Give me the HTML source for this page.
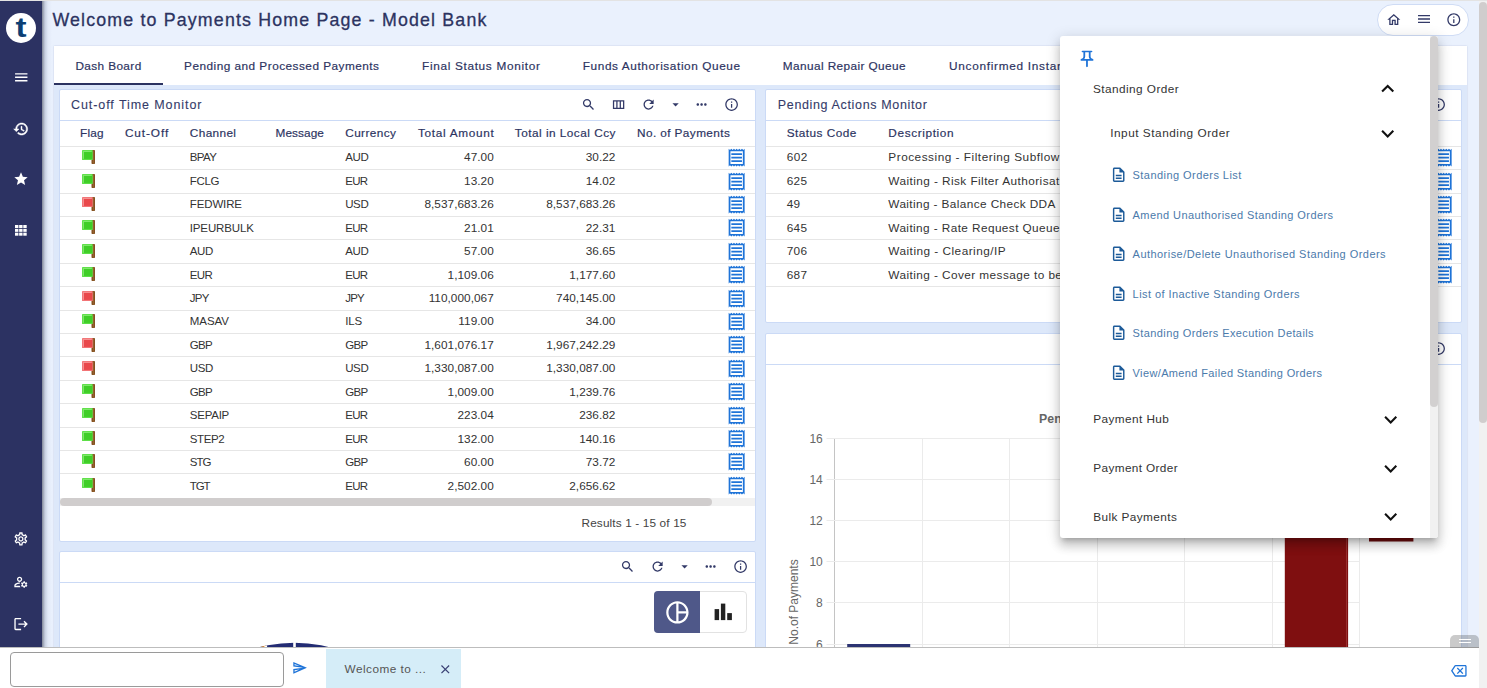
<!DOCTYPE html>
<html lang="en"><head><meta charset="utf-8"><title>Welcome to Payments Home Page - Model Bank</title>
<style>
html,body{margin:0;padding:0;}
body{width:1487px;height:688px;overflow:hidden;position:relative;background:#eaf1fd;font-family:"Liberation Sans",Arial,sans-serif;}
.t{position:absolute;white-space:nowrap;line-height:20px;}
.ic{position:absolute;display:block;}
.abs{position:absolute;box-sizing:border-box;}
.card{position:absolute;box-sizing:border-box;background:#fff;border:1px solid #cbdaf6;border-radius:2px;}
.hline{position:absolute;height:1px;background:#cbdaf6;}
.rline{position:absolute;height:1px;background:#e6e6e6;}
</style></head><body>
<header><span class="t" style="top:10.00px;font-size:17.80px;color:#2c3361;letter-spacing:1.168px;left:52.40px;-webkit-text-stroke:0.30px #2c3361;">Welcome to Payments Home Page - Model Bank</span><div class="abs" style="left:1377.4px;top:4.4px;width:91.2px;height:31.4px;border:1px solid #cfdcf5;border-radius:16px;background:#fff;"></div><svg class="ic" style="left:1385.80px;top:11.70px;width:15.60px;height:15.60px;" viewBox="0 0 24 24"><path fill="#333a68" d="M12 5.69l5 4.5V18h-2v-6H9v6H7v-7.81l5-4.500M12 3L2 12h3v8h6v-6h2v6h6v-8h3L12 3z"/></svg><svg class="ic" style="left:1415.50px;top:11.40px;width:16.00px;height:16.00px;" viewBox="0 0 24 24"><path fill="#333a68" d="M3 18h18v-2H3v2zm0-5h18v-2H3v2zm0-7v2h18V6H3z"/></svg><svg class="ic" style="left:1445.90px;top:11.70px;width:15.60px;height:15.60px;" viewBox="0 0 24 24"><path fill="#333a68" d="M11 7h2v2h-2zm0 4h2v6h-2zm1-9C6.48 2 2 6.48 2 12s4.48 10 10 10 10-4.48 10-10S17.520 2 12 2zm0 18c-4.41 0-8-3.59-8-8s3.59-8 8-8 8 3.59 8 8-3.59 8-8 8z"/></svg></header>
<main><div class="abs" style="left:54px;top:46px;width:1413px;height:602px;background:#dde8fa;box-shadow:0 0 1.500px rgba(130,140,185,.4);"></div><nav class="abs" style="left:54px;top:46px;width:1413px;height:39px;background:#fff;"></nav><div class="abs" style="left:54px;top:83px;width:109px;height:2px;background:#2c3361;"></div><span class="t" style="top:56.00px;font-size:11.80px;color:#2c3361;letter-spacing:0.389px;left:75.40px;-webkit-text-stroke:0.18px #2c3361;">Dash Board</span><span class="t" style="top:56.00px;font-size:11.80px;color:#2c3361;letter-spacing:0.479px;left:184.10px;-webkit-text-stroke:0.18px #2c3361;">Pending and Processed Payments</span><span class="t" style="top:56.00px;font-size:11.80px;color:#2c3361;letter-spacing:0.679px;left:422.00px;-webkit-text-stroke:0.18px #2c3361;">Final Status Monitor</span><span class="t" style="top:56.00px;font-size:11.80px;color:#2c3361;letter-spacing:0.597px;left:582.80px;-webkit-text-stroke:0.18px #2c3361;">Funds Authorisation Queue</span><span class="t" style="top:56.00px;font-size:11.80px;color:#2c3361;letter-spacing:0.410px;left:782.80px;-webkit-text-stroke:0.18px #2c3361;">Manual Repair Queue</span><span class="t" style="top:56.00px;font-size:11.80px;color:#2c3361;letter-spacing:0.720px;left:949.00px;-webkit-text-stroke:0.18px #2c3361;">Unconfirmed Instant Payments</span><section class="card" style="left:59px;top:89px;width:697px;height:453px;"></section><div class="hline" style="left:60px;top:120px;width:695px;"></div><span class="t" style="top:95.00px;font-size:12.50px;color:#343b69;letter-spacing:0.920px;left:71.00px;-webkit-text-stroke:0.10px #343b69;">Cut-off Time Monitor</span><svg class="ic" style="left:580.70px;top:96.80px;width:15.20px;height:15.20px;" viewBox="0 0 24 24"><path fill="#333a68" d="M15.5 14h-.79l-.28-.27C15.41 12.59 16 11.11 16 9.5 16 5.91 13.09 3 9.5 3S3 5.91 3 9.5 5.91 16 9.5 16c1.61 0 3.09-.59 4.23-1.57l.27.28v.79l5 4.99L20.49 19l-4.99-5zm-6 0C7.01 14 5 11.99 5 9.500S7.01 5 9.5 5 14 7.01 14 9.5 11.99 14 9.5 14z"/></svg><svg class="ic" style="left:610.90px;top:96.80px;width:15.20px;height:15.20px;" viewBox="0 0 24 24"><path fill="#333a68" d="M3 5v14h18V5H3zm5.33 12H5V7h3.33v10zm5.34 0h-3.33V7h3.33v10zM19 17h-3.33V7H19v10z"/></svg><svg class="ic" style="left:641.30px;top:96.80px;width:15.20px;height:15.20px;" viewBox="0 0 24 24"><path fill="#333a68" d="M17.65 6.35C16.2 4.9 14.21 4 12 4c-4.42 0-7.99 3.58-7.99 8s3.57 8 7.99 8c3.73 0 6.84-2.55 7.73-6h-2.08c-.82 2.33-3.04 4-5.65 4-3.31 0-6-2.69-6-6s2.69-6 6-6c1.66 0 3.14.69 4.22 1.78L13 11h7V4l-2.35 2.35z"/></svg><svg class="ic" style="left:667.50px;top:96.80px;width:15.20px;height:15.20px;" viewBox="0 0 24 24"><path fill="#333a68" d="M7 10l5 5 5-5z"/></svg><svg class="ic" style="left:694.00px;top:96.80px;width:15.20px;height:15.20px;" viewBox="0 0 24 24"><path fill="#333a68" d="M6 10c-1.1 0-2 .9-2 2s.9 2 2 2 2-.9 2-2-.9-2-2-2zm12 0c-1.1 0-2 .9-2 2s.9 2 2 2 2-.9 2-2-.9-2-2-2zm-6 0c-1.1 0-2 .9-2 2s.9 2 2 2 2-.9 2-2-.9-2-2-2z"/></svg><svg class="ic" style="left:723.60px;top:96.80px;width:15.20px;height:15.20px;" viewBox="0 0 24 24"><path fill="#333a68" d="M11 7h2v2h-2zm0 4h2v6h-2zm1-9C6.48 2 2 6.48 2 12s4.48 10 10 10 10-4.48 10-10S17.520 2 12 2zm0 18c-4.41 0-8-3.59-8-8s3.59-8 8-8 8 3.59 8 8-3.59 8-8 8z"/></svg><span class="t" style="top:123.00px;font-size:11.80px;color:#2c3361;letter-spacing:0.182px;left:80.10px;-webkit-text-stroke:0.18px #2c3361;">Flag</span><span class="t" style="top:123.00px;font-size:11.80px;color:#2c3361;letter-spacing:0.915px;left:124.90px;-webkit-text-stroke:0.18px #2c3361;">Cut-Off</span><span class="t" style="top:123.00px;font-size:11.80px;color:#2c3361;letter-spacing:0.374px;left:189.80px;-webkit-text-stroke:0.18px #2c3361;">Channel</span><span class="t" style="top:123.00px;font-size:11.80px;color:#2c3361;letter-spacing:0.087px;left:275.50px;-webkit-text-stroke:0.18px #2c3361;">Message</span><span class="t" style="top:123.00px;font-size:11.80px;color:#2c3361;letter-spacing:0.420px;left:345.20px;-webkit-text-stroke:0.18px #2c3361;">Currency</span><span class="t" style="top:123.00px;font-size:11.80px;color:#2c3361;letter-spacing:0.682px;right:992.62px;-webkit-text-stroke:0.18px #2c3361;">Total Amount</span><span class="t" style="top:123.00px;font-size:11.80px;color:#2c3361;letter-spacing:0.479px;right:871.12px;-webkit-text-stroke:0.18px #2c3361;">Total in Local Ccy</span><span class="t" style="top:123.00px;font-size:11.80px;color:#2c3361;letter-spacing:0.406px;left:637.00px;-webkit-text-stroke:0.18px #2c3361;">No. of Payments</span><div class="rline" style="left:60px;top:145.80px;width:695px;"></div><svg class="ic" style="left:81.90px;top:150.00px;width:14px;height:15px" viewBox="0 0 14 15"><rect x="9.500" y="0" width="3.500" height="13.900" rx="0.700" fill="#83501f"/><rect x="10.900" y="0.400" width="1.200" height="13.200" fill="#9a6534" opacity=".8"/><rect x="0" y="0" width="10.800" height="10.100" rx="0.700" fill="#5ddf47"/><rect x="1.700" y="1.700" width="8.300" height="7.200" fill="#3fce27"/><path d="M1.400 8.800V1.400H9.700" fill="none" stroke="#a4f595" stroke-width="0.700" opacity=".85"/></svg><span class="t" style="top:147.00px;font-size:11.50px;color:#333;letter-spacing:-0.628px;left:189.80px;">BPAY</span><span class="t" style="top:147.00px;font-size:11.50px;color:#333;letter-spacing:-0.391px;left:345.20px;">AUD</span><span class="t" style="top:147.00px;font-size:11.80px;color:#333;letter-spacing:0.034px;right:993.27px;">47.00</span><span class="t" style="top:147.00px;font-size:11.80px;color:#333;letter-spacing:0.034px;right:871.57px;">30.22</span><svg class="ic" style="left:725.85px;top:147.15px;width:21.30px;height:21.30px;" viewBox="0 0 24 24"><path fill="#1f74d8" d="M19.500 3.500L18 2l-1.500 1.500L15 2l-1.500 1.500L12 2l-1.500 1.500L9 2 7.500 3.500 6 2 4.500 3.500 3 2v20l1.500-1.500L6 22l1.500-1.500L9 22l1.500-1.500L12 22l1.500-1.500L15 22l1.500-1.500L18 22l1.500-1.500L21 22V2l-1.500 1.500zM19 19.090H5V4.910h14v14.180zM6 15h12v2H6zm0-4h12v2H6zm0-4h12v2H6z"/></svg><div class="rline" style="left:60px;top:169.20px;width:695px;"></div><svg class="ic" style="left:81.90px;top:174.00px;width:14px;height:15px" viewBox="0 0 14 15"><rect x="9.500" y="0" width="3.500" height="13.900" rx="0.700" fill="#83501f"/><rect x="10.900" y="0.400" width="1.200" height="13.200" fill="#9a6534" opacity=".8"/><rect x="0" y="0" width="10.800" height="10.100" rx="0.700" fill="#5ddf47"/><rect x="1.700" y="1.700" width="8.300" height="7.200" fill="#3fce27"/><path d="M1.400 8.800V1.400H9.700" fill="none" stroke="#a4f595" stroke-width="0.700" opacity=".85"/></svg><span class="t" style="top:171.00px;font-size:11.50px;color:#333;letter-spacing:-0.324px;left:189.80px;">FCLG</span><span class="t" style="top:171.00px;font-size:11.50px;color:#333;letter-spacing:-0.691px;left:345.20px;">EUR</span><span class="t" style="top:171.00px;font-size:11.80px;color:#333;letter-spacing:0.034px;right:993.27px;">13.20</span><span class="t" style="top:171.00px;font-size:11.80px;color:#333;letter-spacing:0.034px;right:871.57px;">14.02</span><svg class="ic" style="left:725.85px;top:170.55px;width:21.30px;height:21.30px;" viewBox="0 0 24 24"><path fill="#1f74d8" d="M19.500 3.500L18 2l-1.500 1.500L15 2l-1.500 1.500L12 2l-1.500 1.500L9 2 7.500 3.500 6 2 4.500 3.500 3 2v20l1.500-1.500L6 22l1.500-1.500L9 22l1.500-1.500L12 22l1.500-1.500L15 22l1.500-1.500L18 22l1.500-1.500L21 22V2l-1.500 1.500zM19 19.090H5V4.910h14v14.180zM6 15h12v2H6zm0-4h12v2H6zm0-4h12v2H6z"/></svg><div class="rline" style="left:60px;top:192.60px;width:695px;"></div><svg class="ic" style="left:81.90px;top:197.00px;width:14px;height:15px" viewBox="0 0 14 15"><rect x="9.500" y="0" width="3.500" height="13.900" rx="0.700" fill="#83501f"/><rect x="10.900" y="0.400" width="1.200" height="13.200" fill="#9a6534" opacity=".8"/><rect x="0" y="0" width="10.800" height="10.100" rx="0.700" fill="#f27476"/><rect x="1.700" y="1.700" width="8.300" height="7.200" fill="#e9484b"/><path d="M1.400 8.800V1.400H9.700" fill="none" stroke="#fbb4b4" stroke-width="0.700" opacity=".85"/></svg><span class="t" style="top:194.00px;font-size:11.50px;color:#333;letter-spacing:-0.139px;left:189.80px;">FEDWIRE</span><span class="t" style="top:194.00px;font-size:11.50px;color:#333;letter-spacing:-0.391px;left:345.20px;">USD</span><span class="t" style="top:194.00px;font-size:11.80px;color:#333;letter-spacing:0.037px;right:993.26px;">8,537,683.26</span><span class="t" style="top:194.00px;font-size:11.80px;color:#333;letter-spacing:0.037px;right:871.56px;">8,537,683.26</span><svg class="ic" style="left:725.85px;top:193.95px;width:21.30px;height:21.30px;" viewBox="0 0 24 24"><path fill="#1f74d8" d="M19.500 3.500L18 2l-1.500 1.500L15 2l-1.500 1.500L12 2l-1.500 1.500L9 2 7.500 3.500 6 2 4.500 3.500 3 2v20l1.500-1.500L6 22l1.500-1.500L9 22l1.500-1.500L12 22l1.500-1.500L15 22l1.500-1.500L18 22l1.500-1.500L21 22V2l-1.500 1.500zM19 19.090H5V4.910h14v14.180zM6 15h12v2H6zm0-4h12v2H6zm0-4h12v2H6z"/></svg><div class="rline" style="left:60px;top:216.00px;width:695px;"></div><svg class="ic" style="left:81.90px;top:220.00px;width:14px;height:15px" viewBox="0 0 14 15"><rect x="9.500" y="0" width="3.500" height="13.900" rx="0.700" fill="#83501f"/><rect x="10.900" y="0.400" width="1.200" height="13.200" fill="#9a6534" opacity=".8"/><rect x="0" y="0" width="10.800" height="10.100" rx="0.700" fill="#5ddf47"/><rect x="1.700" y="1.700" width="8.300" height="7.200" fill="#3fce27"/><path d="M1.400 8.800V1.400H9.700" fill="none" stroke="#a4f595" stroke-width="0.700" opacity=".85"/></svg><span class="t" style="top:218.00px;font-size:11.50px;color:#333;letter-spacing:-0.148px;left:189.80px;">IPEURBULK</span><span class="t" style="top:218.00px;font-size:11.50px;color:#333;letter-spacing:-0.691px;left:345.20px;">EUR</span><span class="t" style="top:218.00px;font-size:11.80px;color:#333;letter-spacing:0.034px;right:993.27px;">21.01</span><span class="t" style="top:218.00px;font-size:11.80px;color:#333;letter-spacing:0.034px;right:871.57px;">22.31</span><svg class="ic" style="left:725.85px;top:217.35px;width:21.30px;height:21.30px;" viewBox="0 0 24 24"><path fill="#1f74d8" d="M19.500 3.500L18 2l-1.500 1.500L15 2l-1.500 1.500L12 2l-1.500 1.500L9 2 7.500 3.500 6 2 4.500 3.500 3 2v20l1.500-1.500L6 22l1.500-1.500L9 22l1.500-1.500L12 22l1.500-1.500L15 22l1.500-1.500L18 22l1.500-1.500L21 22V2l-1.500 1.500zM19 19.090H5V4.910h14v14.180zM6 15h12v2H6zm0-4h12v2H6zm0-4h12v2H6z"/></svg><div class="rline" style="left:60px;top:239.40px;width:695px;"></div><svg class="ic" style="left:81.90px;top:244.00px;width:14px;height:15px" viewBox="0 0 14 15"><rect x="9.500" y="0" width="3.500" height="13.900" rx="0.700" fill="#83501f"/><rect x="10.900" y="0.400" width="1.200" height="13.200" fill="#9a6534" opacity=".8"/><rect x="0" y="0" width="10.800" height="10.100" rx="0.700" fill="#5ddf47"/><rect x="1.700" y="1.700" width="8.300" height="7.200" fill="#3fce27"/><path d="M1.400 8.800V1.400H9.700" fill="none" stroke="#a4f595" stroke-width="0.700" opacity=".85"/></svg><span class="t" style="top:241.00px;font-size:11.50px;color:#333;letter-spacing:-0.391px;left:189.80px;">AUD</span><span class="t" style="top:241.00px;font-size:11.50px;color:#333;letter-spacing:-0.391px;left:345.20px;">AUD</span><span class="t" style="top:241.00px;font-size:11.80px;color:#333;letter-spacing:0.034px;right:993.27px;">57.00</span><span class="t" style="top:241.00px;font-size:11.80px;color:#333;letter-spacing:0.034px;right:871.57px;">36.65</span><svg class="ic" style="left:725.85px;top:240.75px;width:21.30px;height:21.30px;" viewBox="0 0 24 24"><path fill="#1f74d8" d="M19.500 3.500L18 2l-1.500 1.500L15 2l-1.500 1.500L12 2l-1.500 1.500L9 2 7.500 3.500 6 2 4.500 3.500 3 2v20l1.500-1.500L6 22l1.500-1.500L9 22l1.500-1.500L12 22l1.500-1.500L15 22l1.500-1.500L18 22l1.500-1.500L21 22V2l-1.500 1.500zM19 19.090H5V4.910h14v14.180zM6 15h12v2H6zm0-4h12v2H6zm0-4h12v2H6z"/></svg><div class="rline" style="left:60px;top:262.80px;width:695px;"></div><svg class="ic" style="left:81.90px;top:267.00px;width:14px;height:15px" viewBox="0 0 14 15"><rect x="9.500" y="0" width="3.500" height="13.900" rx="0.700" fill="#83501f"/><rect x="10.900" y="0.400" width="1.200" height="13.200" fill="#9a6534" opacity=".8"/><rect x="0" y="0" width="10.800" height="10.100" rx="0.700" fill="#5ddf47"/><rect x="1.700" y="1.700" width="8.300" height="7.200" fill="#3fce27"/><path d="M1.400 8.800V1.400H9.700" fill="none" stroke="#a4f595" stroke-width="0.700" opacity=".85"/></svg><span class="t" style="top:265.00px;font-size:11.50px;color:#333;letter-spacing:-0.691px;left:189.80px;">EUR</span><span class="t" style="top:265.00px;font-size:11.50px;color:#333;letter-spacing:-0.691px;left:345.20px;">EUR</span><span class="t" style="top:265.00px;font-size:11.80px;color:#333;letter-spacing:0.034px;right:993.27px;">1,109.06</span><span class="t" style="top:265.00px;font-size:11.80px;color:#333;letter-spacing:0.034px;right:871.57px;">1,177.60</span><svg class="ic" style="left:725.85px;top:264.15px;width:21.30px;height:21.30px;" viewBox="0 0 24 24"><path fill="#1f74d8" d="M19.500 3.500L18 2l-1.500 1.500L15 2l-1.500 1.500L12 2l-1.500 1.500L9 2 7.500 3.500 6 2 4.500 3.500 3 2v20l1.500-1.500L6 22l1.500-1.500L9 22l1.500-1.500L12 22l1.500-1.500L15 22l1.500-1.500L18 22l1.500-1.500L21 22V2l-1.500 1.500zM19 19.090H5V4.910h14v14.180zM6 15h12v2H6zm0-4h12v2H6zm0-4h12v2H6z"/></svg><div class="rline" style="left:60px;top:286.20px;width:695px;"></div><svg class="ic" style="left:81.90px;top:291.00px;width:14px;height:15px" viewBox="0 0 14 15"><rect x="9.500" y="0" width="3.500" height="13.900" rx="0.700" fill="#83501f"/><rect x="10.900" y="0.400" width="1.200" height="13.200" fill="#9a6534" opacity=".8"/><rect x="0" y="0" width="10.800" height="10.100" rx="0.700" fill="#f27476"/><rect x="1.700" y="1.700" width="8.300" height="7.200" fill="#e9484b"/><path d="M1.400 8.800V1.400H9.700" fill="none" stroke="#fbb4b4" stroke-width="0.700" opacity=".85"/></svg><span class="t" style="top:288.00px;font-size:11.50px;color:#333;letter-spacing:-0.747px;left:189.80px;">JPY</span><span class="t" style="top:288.00px;font-size:11.50px;color:#333;letter-spacing:-0.747px;left:345.20px;">JPY</span><span class="t" style="top:288.00px;font-size:11.80px;color:#333;letter-spacing:0.034px;right:993.27px;">110,000,067</span><span class="t" style="top:288.00px;font-size:11.80px;color:#333;letter-spacing:0.034px;right:871.57px;">740,145.00</span><svg class="ic" style="left:725.85px;top:287.55px;width:21.30px;height:21.30px;" viewBox="0 0 24 24"><path fill="#1f74d8" d="M19.500 3.500L18 2l-1.500 1.500L15 2l-1.500 1.500L12 2l-1.500 1.500L9 2 7.500 3.500 6 2 4.500 3.500 3 2v20l1.500-1.500L6 22l1.500-1.500L9 22l1.500-1.500L12 22l1.500-1.500L15 22l1.500-1.500L18 22l1.500-1.500L21 22V2l-1.500 1.500zM19 19.090H5V4.910h14v14.180zM6 15h12v2H6zm0-4h12v2H6zm0-4h12v2H6z"/></svg><div class="rline" style="left:60px;top:309.60px;width:695px;"></div><svg class="ic" style="left:81.90px;top:314.00px;width:14px;height:15px" viewBox="0 0 14 15"><rect x="9.500" y="0" width="3.500" height="13.900" rx="0.700" fill="#83501f"/><rect x="10.900" y="0.400" width="1.200" height="13.200" fill="#9a6534" opacity=".8"/><rect x="0" y="0" width="10.800" height="10.100" rx="0.700" fill="#5ddf47"/><rect x="1.700" y="1.700" width="8.300" height="7.200" fill="#3fce27"/><path d="M1.400 8.800V1.400H9.700" fill="none" stroke="#a4f595" stroke-width="0.700" opacity=".85"/></svg><span class="t" style="top:311.00px;font-size:11.50px;color:#333;letter-spacing:-0.055px;left:189.80px;">MASAV</span><span class="t" style="top:311.00px;font-size:11.50px;color:#333;letter-spacing:-0.133px;left:345.20px;">ILS</span><span class="t" style="top:311.00px;font-size:11.80px;color:#333;letter-spacing:0.034px;right:993.27px;">119.00</span><span class="t" style="top:311.00px;font-size:11.80px;color:#333;letter-spacing:0.034px;right:871.57px;">34.00</span><svg class="ic" style="left:725.85px;top:310.95px;width:21.30px;height:21.30px;" viewBox="0 0 24 24"><path fill="#1f74d8" d="M19.500 3.500L18 2l-1.500 1.500L15 2l-1.500 1.500L12 2l-1.500 1.500L9 2 7.500 3.500 6 2 4.500 3.500 3 2v20l1.500-1.500L6 22l1.500-1.500L9 22l1.500-1.500L12 22l1.500-1.500L15 22l1.500-1.500L18 22l1.500-1.500L21 22V2l-1.500 1.500zM19 19.090H5V4.910h14v14.180zM6 15h12v2H6zm0-4h12v2H6zm0-4h12v2H6z"/></svg><div class="rline" style="left:60px;top:333.00px;width:695px;"></div><svg class="ic" style="left:81.90px;top:338.00px;width:14px;height:15px" viewBox="0 0 14 15"><rect x="9.500" y="0" width="3.500" height="13.900" rx="0.700" fill="#83501f"/><rect x="10.900" y="0.400" width="1.200" height="13.200" fill="#9a6534" opacity=".8"/><rect x="0" y="0" width="10.800" height="10.100" rx="0.700" fill="#f27476"/><rect x="1.700" y="1.700" width="8.300" height="7.200" fill="#e9484b"/><path d="M1.400 8.800V1.400H9.700" fill="none" stroke="#fbb4b4" stroke-width="0.700" opacity=".85"/></svg><span class="t" style="top:335.00px;font-size:11.50px;color:#333;letter-spacing:-0.698px;left:189.80px;">GBP</span><span class="t" style="top:335.00px;font-size:11.50px;color:#333;letter-spacing:-0.698px;left:345.20px;">GBP</span><span class="t" style="top:335.00px;font-size:11.80px;color:#333;letter-spacing:0.034px;right:993.27px;">1,601,076.17</span><span class="t" style="top:335.00px;font-size:11.80px;color:#333;letter-spacing:0.034px;right:871.57px;">1,967,242.29</span><svg class="ic" style="left:725.85px;top:334.35px;width:21.30px;height:21.30px;" viewBox="0 0 24 24"><path fill="#1f74d8" d="M19.500 3.500L18 2l-1.500 1.500L15 2l-1.500 1.500L12 2l-1.500 1.500L9 2 7.500 3.500 6 2 4.500 3.500 3 2v20l1.500-1.500L6 22l1.500-1.500L9 22l1.500-1.500L12 22l1.500-1.500L15 22l1.500-1.500L18 22l1.500-1.500L21 22V2l-1.500 1.500zM19 19.090H5V4.910h14v14.180zM6 15h12v2H6zm0-4h12v2H6zm0-4h12v2H6z"/></svg><div class="rline" style="left:60px;top:356.40px;width:695px;"></div><svg class="ic" style="left:81.90px;top:361.00px;width:14px;height:15px" viewBox="0 0 14 15"><rect x="9.500" y="0" width="3.500" height="13.900" rx="0.700" fill="#83501f"/><rect x="10.900" y="0.400" width="1.200" height="13.200" fill="#9a6534" opacity=".8"/><rect x="0" y="0" width="10.800" height="10.100" rx="0.700" fill="#f27476"/><rect x="1.700" y="1.700" width="8.300" height="7.200" fill="#e9484b"/><path d="M1.400 8.800V1.400H9.700" fill="none" stroke="#fbb4b4" stroke-width="0.700" opacity=".85"/></svg><span class="t" style="top:358.00px;font-size:11.50px;color:#333;letter-spacing:-0.391px;left:189.80px;">USD</span><span class="t" style="top:358.00px;font-size:11.50px;color:#333;letter-spacing:-0.391px;left:345.20px;">USD</span><span class="t" style="top:358.00px;font-size:11.80px;color:#333;letter-spacing:0.034px;right:993.27px;">1,330,087.00</span><span class="t" style="top:358.00px;font-size:11.80px;color:#333;letter-spacing:0.034px;right:871.57px;">1,330,087.00</span><svg class="ic" style="left:725.85px;top:357.75px;width:21.30px;height:21.30px;" viewBox="0 0 24 24"><path fill="#1f74d8" d="M19.500 3.500L18 2l-1.500 1.500L15 2l-1.500 1.500L12 2l-1.500 1.500L9 2 7.500 3.500 6 2 4.500 3.500 3 2v20l1.500-1.500L6 22l1.500-1.500L9 22l1.500-1.500L12 22l1.500-1.500L15 22l1.500-1.500L18 22l1.500-1.500L21 22V2l-1.500 1.500zM19 19.090H5V4.910h14v14.180zM6 15h12v2H6zm0-4h12v2H6zm0-4h12v2H6z"/></svg><div class="rline" style="left:60px;top:379.80px;width:695px;"></div><svg class="ic" style="left:81.90px;top:384.00px;width:14px;height:15px" viewBox="0 0 14 15"><rect x="9.500" y="0" width="3.500" height="13.900" rx="0.700" fill="#83501f"/><rect x="10.900" y="0.400" width="1.200" height="13.200" fill="#9a6534" opacity=".8"/><rect x="0" y="0" width="10.800" height="10.100" rx="0.700" fill="#5ddf47"/><rect x="1.700" y="1.700" width="8.300" height="7.200" fill="#3fce27"/><path d="M1.400 8.800V1.400H9.700" fill="none" stroke="#a4f595" stroke-width="0.700" opacity=".85"/></svg><span class="t" style="top:382.00px;font-size:11.50px;color:#333;letter-spacing:-0.698px;left:189.80px;">GBP</span><span class="t" style="top:382.00px;font-size:11.50px;color:#333;letter-spacing:-0.698px;left:345.20px;">GBP</span><span class="t" style="top:382.00px;font-size:11.80px;color:#333;letter-spacing:0.034px;right:993.27px;">1,009.00</span><span class="t" style="top:382.00px;font-size:11.80px;color:#333;letter-spacing:0.034px;right:871.57px;">1,239.76</span><svg class="ic" style="left:725.85px;top:381.15px;width:21.30px;height:21.30px;" viewBox="0 0 24 24"><path fill="#1f74d8" d="M19.500 3.500L18 2l-1.500 1.500L15 2l-1.500 1.500L12 2l-1.500 1.500L9 2 7.500 3.500 6 2 4.500 3.500 3 2v20l1.500-1.500L6 22l1.500-1.500L9 22l1.500-1.500L12 22l1.500-1.500L15 22l1.500-1.500L18 22l1.500-1.500L21 22V2l-1.500 1.500zM19 19.090H5V4.910h14v14.180zM6 15h12v2H6zm0-4h12v2H6zm0-4h12v2H6z"/></svg><div class="rline" style="left:60px;top:403.20px;width:695px;"></div><svg class="ic" style="left:81.90px;top:408.00px;width:14px;height:15px" viewBox="0 0 14 15"><rect x="9.500" y="0" width="3.500" height="13.900" rx="0.700" fill="#83501f"/><rect x="10.900" y="0.400" width="1.200" height="13.200" fill="#9a6534" opacity=".8"/><rect x="0" y="0" width="10.800" height="10.100" rx="0.700" fill="#5ddf47"/><rect x="1.700" y="1.700" width="8.300" height="7.200" fill="#3fce27"/><path d="M1.400 8.800V1.400H9.700" fill="none" stroke="#a4f595" stroke-width="0.700" opacity=".85"/></svg><span class="t" style="top:405.00px;font-size:11.50px;color:#333;letter-spacing:-0.241px;left:189.80px;">SEPAIP</span><span class="t" style="top:405.00px;font-size:11.50px;color:#333;letter-spacing:-0.691px;left:345.20px;">EUR</span><span class="t" style="top:405.00px;font-size:11.80px;color:#333;letter-spacing:0.034px;right:993.27px;">223.04</span><span class="t" style="top:405.00px;font-size:11.80px;color:#333;letter-spacing:0.034px;right:871.57px;">236.82</span><svg class="ic" style="left:725.85px;top:404.55px;width:21.30px;height:21.30px;" viewBox="0 0 24 24"><path fill="#1f74d8" d="M19.500 3.500L18 2l-1.500 1.500L15 2l-1.500 1.500L12 2l-1.500 1.500L9 2 7.500 3.500 6 2 4.500 3.500 3 2v20l1.500-1.500L6 22l1.500-1.500L9 22l1.500-1.500L12 22l1.500-1.500L15 22l1.500-1.500L18 22l1.500-1.500L21 22V2l-1.500 1.500zM19 19.090H5V4.910h14v14.180zM6 15h12v2H6zm0-4h12v2H6zm0-4h12v2H6z"/></svg><div class="rline" style="left:60px;top:426.60px;width:695px;"></div><svg class="ic" style="left:81.90px;top:431.00px;width:14px;height:15px" viewBox="0 0 14 15"><rect x="9.500" y="0" width="3.500" height="13.900" rx="0.700" fill="#83501f"/><rect x="10.900" y="0.400" width="1.200" height="13.200" fill="#9a6534" opacity=".8"/><rect x="0" y="0" width="10.800" height="10.100" rx="0.700" fill="#5ddf47"/><rect x="1.700" y="1.700" width="8.300" height="7.200" fill="#3fce27"/><path d="M1.400 8.800V1.400H9.700" fill="none" stroke="#a4f595" stroke-width="0.700" opacity=".85"/></svg><span class="t" style="top:429.00px;font-size:11.50px;color:#333;letter-spacing:-0.409px;left:189.80px;">STEP2</span><span class="t" style="top:429.00px;font-size:11.50px;color:#333;letter-spacing:-0.691px;left:345.20px;">EUR</span><span class="t" style="top:429.00px;font-size:11.80px;color:#333;letter-spacing:0.034px;right:993.27px;">132.00</span><span class="t" style="top:429.00px;font-size:11.80px;color:#333;letter-spacing:0.034px;right:871.57px;">140.16</span><svg class="ic" style="left:725.85px;top:427.95px;width:21.30px;height:21.30px;" viewBox="0 0 24 24"><path fill="#1f74d8" d="M19.500 3.500L18 2l-1.500 1.500L15 2l-1.500 1.500L12 2l-1.500 1.500L9 2 7.500 3.500 6 2 4.500 3.500 3 2v20l1.500-1.500L6 22l1.500-1.500L9 22l1.500-1.500L12 22l1.500-1.500L15 22l1.500-1.500L18 22l1.500-1.500L21 22V2l-1.500 1.500zM19 19.090H5V4.910h14v14.180zM6 15h12v2H6zm0-4h12v2H6zm0-4h12v2H6z"/></svg><div class="rline" style="left:60px;top:450.00px;width:695px;"></div><svg class="ic" style="left:81.90px;top:454.00px;width:14px;height:15px" viewBox="0 0 14 15"><rect x="9.500" y="0" width="3.500" height="13.900" rx="0.700" fill="#83501f"/><rect x="10.900" y="0.400" width="1.200" height="13.200" fill="#9a6534" opacity=".8"/><rect x="0" y="0" width="10.800" height="10.100" rx="0.700" fill="#5ddf47"/><rect x="1.700" y="1.700" width="8.300" height="7.200" fill="#3fce27"/><path d="M1.400 8.800V1.400H9.700" fill="none" stroke="#a4f595" stroke-width="0.700" opacity=".85"/></svg><span class="t" style="top:452.00px;font-size:11.50px;color:#333;letter-spacing:-1.020px;left:189.80px;">STG</span><span class="t" style="top:452.00px;font-size:11.50px;color:#333;letter-spacing:-0.698px;left:345.20px;">GBP</span><span class="t" style="top:452.00px;font-size:11.80px;color:#333;letter-spacing:0.034px;right:993.27px;">60.00</span><span class="t" style="top:452.00px;font-size:11.80px;color:#333;letter-spacing:0.034px;right:871.57px;">73.72</span><svg class="ic" style="left:725.85px;top:451.35px;width:21.30px;height:21.30px;" viewBox="0 0 24 24"><path fill="#1f74d8" d="M19.500 3.500L18 2l-1.500 1.500L15 2l-1.500 1.500L12 2l-1.500 1.500L9 2 7.500 3.500 6 2 4.500 3.500 3 2v20l1.500-1.500L6 22l1.500-1.500L9 22l1.500-1.500L12 22l1.500-1.500L15 22l1.500-1.500L18 22l1.500-1.500L21 22V2l-1.500 1.500zM19 19.090H5V4.910h14v14.180zM6 15h12v2H6zm0-4h12v2H6zm0-4h12v2H6z"/></svg><div class="rline" style="left:60px;top:473.40px;width:695px;"></div><svg class="ic" style="left:81.90px;top:478.00px;width:14px;height:15px" viewBox="0 0 14 15"><rect x="9.500" y="0" width="3.500" height="13.900" rx="0.700" fill="#83501f"/><rect x="10.900" y="0.400" width="1.200" height="13.200" fill="#9a6534" opacity=".8"/><rect x="0" y="0" width="10.800" height="10.100" rx="0.700" fill="#5ddf47"/><rect x="1.700" y="1.700" width="8.300" height="7.200" fill="#3fce27"/><path d="M1.400 8.800V1.400H9.700" fill="none" stroke="#a4f595" stroke-width="0.700" opacity=".85"/></svg><span class="t" style="top:476.00px;font-size:11.50px;color:#333;letter-spacing:-1.100px;left:189.80px;">TGT</span><span class="t" style="top:476.00px;font-size:11.50px;color:#333;letter-spacing:-0.691px;left:345.20px;">EUR</span><span class="t" style="top:476.00px;font-size:11.80px;color:#333;letter-spacing:0.034px;right:993.27px;">2,502.00</span><span class="t" style="top:476.00px;font-size:11.80px;color:#333;letter-spacing:0.034px;right:871.57px;">2,656.62</span><svg class="ic" style="left:725.85px;top:474.75px;width:21.30px;height:21.30px;" viewBox="0 0 24 24"><path fill="#1f74d8" d="M19.500 3.500L18 2l-1.500 1.500L15 2l-1.500 1.500L12 2l-1.500 1.500L9 2 7.500 3.500 6 2 4.500 3.500 3 2v20l1.500-1.500L6 22l1.500-1.500L9 22l1.500-1.500L12 22l1.500-1.500L15 22l1.500-1.500L18 22l1.500-1.500L21 22V2l-1.500 1.500zM19 19.090H5V4.910h14v14.180zM6 15h12v2H6zm0-4h12v2H6zm0-4h12v2H6z"/></svg><div class="abs" style="left:60px;top:497.5px;width:695px;height:8.500px;background:#f1f1f1;"></div><div class="abs" style="left:60px;top:497.5px;width:652px;height:8.500px;background:#d0cdcd;border-radius:5px;"></div><span class="t" style="top:513.00px;font-size:11.80px;color:#444;letter-spacing:0.137px;left:581.50px;">Results 1 - 15 of 15</span><section class="card" style="left:765px;top:89px;width:697px;height:234px;"></section><div class="hline" style="left:766px;top:120px;width:695px;"></div><span class="t" style="top:95.00px;font-size:12.50px;color:#343b69;letter-spacing:0.645px;left:777.80px;-webkit-text-stroke:0.10px #343b69;">Pending Actions Monitor</span><svg class="ic" style="left:1430.90px;top:96.80px;width:15.20px;height:15.20px;" viewBox="0 0 24 24"><path fill="#333a68" d="M11 7h2v2h-2zm0 4h2v6h-2zm1-9C6.48 2 2 6.48 2 12s4.48 10 10 10 10-4.48 10-10S17.520 2 12 2zm0 18c-4.41 0-8-3.59-8-8s3.59-8 8-8 8 3.59 8 8-3.59 8-8 8z"/></svg><span class="t" style="top:123.00px;font-size:11.80px;color:#2c3361;letter-spacing:0.456px;left:786.80px;-webkit-text-stroke:0.18px #2c3361;">Status Code</span><span class="t" style="top:123.00px;font-size:11.80px;color:#2c3361;letter-spacing:0.628px;left:888.30px;-webkit-text-stroke:0.18px #2c3361;">Description</span><div class="rline" style="left:766px;top:145.80px;width:695px;"></div><span class="t" style="top:147.00px;font-size:11.80px;color:#333;letter-spacing:0.406px;left:786.80px;">602</span><span class="t" style="top:147.00px;font-size:11.80px;color:#333;letter-spacing:0.516px;left:888.30px;">Processing - Filtering Subflow</span><svg class="ic" style="left:1432.75px;top:147.15px;width:21.30px;height:21.30px;" viewBox="0 0 24 24"><path fill="#1f74d8" d="M19.500 3.500L18 2l-1.500 1.500L15 2l-1.500 1.500L12 2l-1.500 1.500L9 2 7.500 3.500 6 2 4.500 3.500 3 2v20l1.500-1.500L6 22l1.500-1.500L9 22l1.500-1.500L12 22l1.500-1.500L15 22l1.500-1.500L18 22l1.500-1.500L21 22V2l-1.500 1.500zM19 19.090H5V4.910h14v14.180zM6 15h12v2H6zm0-4h12v2H6zm0-4h12v2H6z"/></svg><div class="rline" style="left:766px;top:169.20px;width:695px;"></div><span class="t" style="top:171.00px;font-size:11.80px;color:#333;letter-spacing:0.255px;left:786.80px;">625</span><span class="t" style="top:171.00px;font-size:11.80px;color:#333;letter-spacing:0.433px;left:888.30px;">Waiting - Risk Filter Authorisation</span><svg class="ic" style="left:1432.75px;top:170.55px;width:21.30px;height:21.30px;" viewBox="0 0 24 24"><path fill="#1f74d8" d="M19.500 3.500L18 2l-1.500 1.500L15 2l-1.500 1.500L12 2l-1.500 1.500L9 2 7.500 3.500 6 2 4.500 3.500 3 2v20l1.500-1.500L6 22l1.500-1.500L9 22l1.500-1.500L12 22l1.500-1.500L15 22l1.500-1.500L18 22l1.500-1.500L21 22V2l-1.500 1.500zM19 19.090H5V4.910h14v14.180zM6 15h12v2H6zm0-4h12v2H6zm0-4h12v2H6z"/></svg><div class="rline" style="left:766px;top:192.60px;width:695px;"></div><span class="t" style="top:194.00px;font-size:11.80px;color:#333;letter-spacing:0.255px;left:786.80px;">49</span><span class="t" style="top:194.00px;font-size:11.80px;color:#333;letter-spacing:0.391px;left:888.30px;">Waiting - Balance Check DDA</span><svg class="ic" style="left:1432.75px;top:193.95px;width:21.30px;height:21.30px;" viewBox="0 0 24 24"><path fill="#1f74d8" d="M19.500 3.500L18 2l-1.500 1.500L15 2l-1.500 1.500L12 2l-1.500 1.500L9 2 7.500 3.500 6 2 4.500 3.500 3 2v20l1.500-1.500L6 22l1.500-1.500L9 22l1.500-1.500L12 22l1.500-1.500L15 22l1.500-1.500L18 22l1.500-1.500L21 22V2l-1.500 1.500zM19 19.090H5V4.910h14v14.180zM6 15h12v2H6zm0-4h12v2H6zm0-4h12v2H6z"/></svg><div class="rline" style="left:766px;top:216.00px;width:695px;"></div><span class="t" style="top:218.00px;font-size:11.80px;color:#333;letter-spacing:0.255px;left:786.80px;">645</span><span class="t" style="top:218.00px;font-size:11.80px;color:#333;letter-spacing:0.410px;left:888.30px;">Waiting - Rate Request Queue</span><svg class="ic" style="left:1432.75px;top:217.35px;width:21.30px;height:21.30px;" viewBox="0 0 24 24"><path fill="#1f74d8" d="M19.500 3.500L18 2l-1.500 1.500L15 2l-1.500 1.500L12 2l-1.500 1.500L9 2 7.500 3.500 6 2 4.500 3.500 3 2v20l1.500-1.500L6 22l1.500-1.500L9 22l1.500-1.500L12 22l1.500-1.500L15 22l1.500-1.500L18 22l1.500-1.500L21 22V2l-1.500 1.500zM19 19.090H5V4.910h14v14.180zM6 15h12v2H6zm0-4h12v2H6zm0-4h12v2H6z"/></svg><div class="rline" style="left:766px;top:239.40px;width:695px;"></div><span class="t" style="top:241.00px;font-size:11.80px;color:#333;letter-spacing:0.255px;left:786.80px;">706</span><span class="t" style="top:241.00px;font-size:11.80px;color:#333;letter-spacing:0.483px;left:888.30px;">Waiting - Clearing/IP</span><svg class="ic" style="left:1432.75px;top:240.75px;width:21.30px;height:21.30px;" viewBox="0 0 24 24"><path fill="#1f74d8" d="M19.500 3.500L18 2l-1.500 1.500L15 2l-1.500 1.500L12 2l-1.500 1.500L9 2 7.500 3.500 6 2 4.500 3.500 3 2v20l1.500-1.500L6 22l1.500-1.500L9 22l1.500-1.500L12 22l1.500-1.500L15 22l1.500-1.500L18 22l1.500-1.500L21 22V2l-1.500 1.500zM19 19.090H5V4.910h14v14.180zM6 15h12v2H6zm0-4h12v2H6zm0-4h12v2H6z"/></svg><div class="rline" style="left:766px;top:262.80px;width:695px;"></div><span class="t" style="top:265.00px;font-size:11.80px;color:#333;letter-spacing:0.255px;left:786.80px;">687</span><span class="t" style="top:265.00px;font-size:11.80px;color:#333;letter-spacing:0.433px;left:888.30px;">Waiting - Cover message to be sent</span><svg class="ic" style="left:1432.75px;top:264.15px;width:21.30px;height:21.30px;" viewBox="0 0 24 24"><path fill="#1f74d8" d="M19.500 3.500L18 2l-1.500 1.500L15 2l-1.500 1.500L12 2l-1.500 1.500L9 2 7.500 3.500 6 2 4.500 3.500 3 2v20l1.500-1.500L6 22l1.500-1.500L9 22l1.500-1.500L12 22l1.500-1.500L15 22l1.500-1.500L18 22l1.500-1.500L21 22V2l-1.500 1.500zM19 19.090H5V4.910h14v14.180zM6 15h12v2H6zm0-4h12v2H6zm0-4h12v2H6z"/></svg><div class="rline" style="left:766px;top:286.20px;width:695px;"></div><section class="card" style="left:59px;top:551px;width:697px;height:120px;"></section><div class="hline" style="left:60px;top:582px;width:695px;"></div><svg class="ic" style="left:619.90px;top:558.50px;width:15.20px;height:15.20px;" viewBox="0 0 24 24"><path fill="#333a68" d="M15.5 14h-.79l-.28-.27C15.41 12.59 16 11.11 16 9.5 16 5.91 13.09 3 9.5 3S3 5.91 3 9.5 5.91 16 9.5 16c1.61 0 3.09-.59 4.23-1.57l.27.28v.79l5 4.99L20.49 19l-4.99-5zm-6 0C7.01 14 5 11.99 5 9.500S7.01 5 9.5 5 14 7.01 14 9.5 11.99 14 9.5 14z"/></svg><svg class="ic" style="left:650.40px;top:558.50px;width:15.20px;height:15.20px;" viewBox="0 0 24 24"><path fill="#333a68" d="M17.65 6.35C16.2 4.9 14.21 4 12 4c-4.42 0-7.99 3.58-7.99 8s3.57 8 7.99 8c3.73 0 6.84-2.55 7.73-6h-2.08c-.82 2.33-3.04 4-5.65 4-3.31 0-6-2.69-6-6s2.69-6 6-6c1.66 0 3.14.69 4.22 1.78L13 11h7V4l-2.35 2.35z"/></svg><svg class="ic" style="left:676.70px;top:558.50px;width:15.20px;height:15.20px;" viewBox="0 0 24 24"><path fill="#333a68" d="M7 10l5 5 5-5z"/></svg><svg class="ic" style="left:703.00px;top:558.50px;width:15.20px;height:15.20px;" viewBox="0 0 24 24"><path fill="#333a68" d="M6 10c-1.1 0-2 .9-2 2s.9 2 2 2 2-.9 2-2-.9-2-2-2zm12 0c-1.1 0-2 .9-2 2s.9 2 2 2 2-.9 2-2-.9-2-2-2zm-6 0c-1.1 0-2 .9-2 2s.9 2 2 2 2-.9 2-2-.9-2-2-2z"/></svg><svg class="ic" style="left:733.10px;top:558.50px;width:15.20px;height:15.20px;" viewBox="0 0 24 24"><path fill="#333a68" d="M11 7h2v2h-2zm0 4h2v6h-2zm1-9C6.48 2 2 6.48 2 12s4.48 10 10 10 10-4.48 10-10S17.520 2 12 2zm0 18c-4.41 0-8-3.59-8-8s3.59-8 8-8 8 3.59 8 8-3.59 8-8 8z"/></svg><div class="abs" style="left:654px;top:591px;width:93px;height:42px;border:1px solid #e2e2e2;border-radius:4px;background:#fff;"></div><div class="abs" style="left:654px;top:591px;width:45.500px;height:42px;border-radius:4px 0 0 4px;background:#4f5889;"></div><svg class="ic" style="left:663.80px;top:598.50px;width:26.80px;height:26.80px;" viewBox="0 0 24 24"><path fill="#fff" d="M12 2C6.480 2 2 6.480 2 12s4.480 10 10 10 10-4.480 10-10S17.520 2 12 2zm1 2.070c3.610.45 6.480 3.330 6.930 6.930H13V4.070zM4 12c0-4.060 3.070-7.440 7-7.930v15.870c-3.930-.5-7-3.880-7-7.940zm9 7.930V13h6.930c-.45 3.610-3.320 6.480-6.930 6.930z"/></svg><svg class="ic" style="left:714px;top:603px;width:19px;height:18px" viewBox="714 603 19 18"><rect x="714.600" y="609.100" width="4.500" height="11" fill="#222"/><rect x="720.900" y="603.600" width="4.400" height="16.500" fill="#222"/><rect x="727.200" y="613.100" width="4.700" height="7" fill="#222"/></svg><svg class="ic" style="left:59px;top:583px;width:600px;height:66px" viewBox="59 583 600 66"><circle cx="294.500" cy="779.300" r="136.600" fill="#232c73"/><path d="M294.500 779.300L259.700 647.200L266 645.400Z" fill="#f0952a"/><rect x="293.200" y="640" width="2.600" height="10" fill="#fff"/><path d="M294.500 779.300L264.300 646.100L266.900 645.400Z" fill="#fff"/></svg><section class="card" style="left:765px;top:333px;width:697px;height:330px;"></section><div class="hline" style="left:766px;top:364px;width:695px;"></div><svg class="ic" style="left:1430.90px;top:340.90px;width:15.20px;height:15.20px;" viewBox="0 0 24 24"><path fill="#333a68" d="M11 7h2v2h-2zm0 4h2v6h-2zm1-9C6.48 2 2 6.48 2 12s4.48 10 10 10 10-4.48 10-10S17.520 2 12 2zm0 18c-4.41 0-8-3.59-8-8s3.59-8 8-8 8 3.59 8 8-3.59 8-8 8z"/></svg><svg class="ic" style="left:766px;top:365px;width:695px;height:283px;font-family:'Liberation Sans',Arial,sans-serif" viewBox="766 365 695 283"><line x1="834.50" y1="438" x2="834.50" y2="660" stroke="#c4c4c4" stroke-width="1"/><line x1="922.50" y1="438" x2="922.50" y2="660" stroke="#ebebeb" stroke-width="1"/><line x1="1009.50" y1="438" x2="1009.50" y2="660" stroke="#ebebeb" stroke-width="1"/><line x1="1097.50" y1="438" x2="1097.50" y2="660" stroke="#ebebeb" stroke-width="1"/><line x1="1184.50" y1="438" x2="1184.50" y2="660" stroke="#ebebeb" stroke-width="1"/><line x1="1272.50" y1="438" x2="1272.50" y2="660" stroke="#ebebeb" stroke-width="1"/><line x1="1359.50" y1="438" x2="1359.50" y2="660" stroke="#ebebeb" stroke-width="1"/><line x1="826.500" y1="438.50" x2="1360" y2="438.50" stroke="#ebebeb" stroke-width="1"/><text x="822.800" y="442.80" text-anchor="end" font-size="12" fill="#666">16</text><line x1="826.500" y1="479.50" x2="1360" y2="479.50" stroke="#ebebeb" stroke-width="1"/><text x="822.800" y="483.80" text-anchor="end" font-size="12" fill="#666">14</text><line x1="826.500" y1="520.50" x2="1360" y2="520.50" stroke="#ebebeb" stroke-width="1"/><text x="822.800" y="524.80" text-anchor="end" font-size="12" fill="#666">12</text><line x1="826.500" y1="561.50" x2="1360" y2="561.50" stroke="#ebebeb" stroke-width="1"/><text x="822.800" y="565.80" text-anchor="end" font-size="12" fill="#666">10</text><line x1="826.500" y1="602.50" x2="1360" y2="602.50" stroke="#ebebeb" stroke-width="1"/><text x="822.800" y="606.80" text-anchor="end" font-size="12" fill="#666">8</text><line x1="826.500" y1="644.50" x2="1360" y2="644.50" stroke="#ebebeb" stroke-width="1"/><text x="822.800" y="648.80" text-anchor="end" font-size="12" fill="#666">6</text><rect x="847.200" y="644" width="63" height="20" fill="#2c3372"/><rect x="1284.800" y="438" width="63.300" height="230" fill="#7f0f10"/><rect x="1346" y="438" width="1" height="230" fill="#9a3030"/><rect x="1369" y="529.500" width="44.400" height="12" fill="#6f0c0d"/><text x="1039.100" y="423.400" font-size="12.300" font-weight="bold" fill="#666">Pending Actions Monitor</text><text transform="translate(798.300 602) rotate(-90)" text-anchor="middle" font-size="12" fill="#666">No.of Payments</text></svg></main>
<aside class="abs" style="left:1060px;top:36px;width:378px;height:501.500px;background:#fff;border-radius:3px;box-shadow:0 5px 5px -3px rgba(0,0,0,.2),0 8px 10px 1px rgba(0,0,0,.14),0 3px 14px 2px rgba(0,0,0,.12);"></aside><div class="abs" style="left:1430px;top:36px;width:8px;height:501.500px;background:#f1f1f1;border-radius:0 3px 3px 0;"></div><div class="abs" style="left:1430px;top:36px;width:8px;height:370.500px;background:#d2d0d0;border-radius:4px;"></div><svg class="ic" style="left:1076.60px;top:48.60px;width:20.00px;height:20.00px;transform:scaleX(1.08);" viewBox="0 0 24 24"><path fill="#1f74d8" d="M14 4v5c0 1.120.37 2.160 1 3H9c.65-.86 1-1.900 1-3V4h4m3-2H7c-.55 0-1 .45-1 1s.45 1 1 1h1v5c0 1.660-1.340 3-3 3v2h5.970v7l1 1 1-1v-7H19v-2c-1.660 0-3-1.340-3-3V4h1c.55 0 1-.45 1-1s-.45-1-1-1z"/></svg><span class="t" style="top:79.00px;font-size:11.80px;color:#333;letter-spacing:0.437px;left:1093.00px;">Standing Order</span><svg class="ic" style="left:1375.10px;top:75.50px;width:25.40px;height:25.40px;" viewBox="0 0 24 24"><path fill="#111" d="M12 8l-6 6 1.41 1.41L12 10.83l4.59 4.58L18 14z"/></svg><span class="t" style="top:123.00px;font-size:11.80px;color:#333;letter-spacing:0.525px;left:1110.20px;">Input Standing Order</span><svg class="ic" style="left:1375.10px;top:120.90px;width:25.40px;height:25.40px;" viewBox="0 0 24 24"><path fill="#111" d="M16.59 8.59L12 13.17 7.41 8.59 6 10l6 6 6-6z"/></svg><svg class="ic" style="left:1109.70px;top:165.80px;width:17.40px;height:17.40px;" viewBox="0 0 24 24"><path fill="#1d5b99" d="M8 16h8v2H8zm0-4h8v2H8zm6-10H6c-1.1 0-2 .9-2 2v16c0 1.1.89 2 1.99 2H18c1.1 0 2-.9 2-2V8l-6-6zm4 18H6V4h7v5h5v11z"/></svg><span class="t" style="top:165.00px;font-size:11.00px;color:#4b7aab;letter-spacing:0.443px;left:1132.60px;">Standing Orders List</span><svg class="ic" style="left:1109.70px;top:205.80px;width:17.40px;height:17.40px;" viewBox="0 0 24 24"><path fill="#1d5b99" d="M8 16h8v2H8zm0-4h8v2H8zm6-10H6c-1.1 0-2 .9-2 2v16c0 1.1.89 2 1.99 2H18c1.1 0 2-.9 2-2V8l-6-6zm4 18H6V4h7v5h5v11z"/></svg><span class="t" style="top:205.00px;font-size:11.00px;color:#4b7aab;letter-spacing:0.424px;left:1132.60px;">Amend Unauthorised Standing Orders</span><svg class="ic" style="left:1109.70px;top:244.80px;width:17.40px;height:17.40px;" viewBox="0 0 24 24"><path fill="#1d5b99" d="M8 16h8v2H8zm0-4h8v2H8zm6-10H6c-1.1 0-2 .9-2 2v16c0 1.1.89 2 1.99 2H18c1.1 0 2-.9 2-2V8l-6-6zm4 18H6V4h7v5h5v11z"/></svg><span class="t" style="top:244.00px;font-size:11.00px;color:#4b7aab;letter-spacing:0.455px;left:1132.60px;">Authorise/Delete Unauthorised Standing Orders</span><svg class="ic" style="left:1109.70px;top:284.80px;width:17.40px;height:17.40px;" viewBox="0 0 24 24"><path fill="#1d5b99" d="M8 16h8v2H8zm0-4h8v2H8zm6-10H6c-1.1 0-2 .9-2 2v16c0 1.1.89 2 1.99 2H18c1.1 0 2-.9 2-2V8l-6-6zm4 18H6V4h7v5h5v11z"/></svg><span class="t" style="top:284.00px;font-size:11.00px;color:#4b7aab;letter-spacing:0.436px;left:1132.60px;">List of Inactive Standing Orders</span><svg class="ic" style="left:1109.70px;top:323.80px;width:17.40px;height:17.40px;" viewBox="0 0 24 24"><path fill="#1d5b99" d="M8 16h8v2H8zm0-4h8v2H8zm6-10H6c-1.1 0-2 .9-2 2v16c0 1.1.89 2 1.99 2H18c1.1 0 2-.9 2-2V8l-6-6zm4 18H6V4h7v5h5v11z"/></svg><span class="t" style="top:323.00px;font-size:11.00px;color:#4b7aab;letter-spacing:0.401px;left:1132.60px;">Standing Orders Execution Details</span><svg class="ic" style="left:1109.70px;top:363.80px;width:17.40px;height:17.40px;" viewBox="0 0 24 24"><path fill="#1d5b99" d="M8 16h8v2H8zm0-4h8v2H8zm6-10H6c-1.1 0-2 .9-2 2v16c0 1.1.89 2 1.99 2H18c1.1 0 2-.9 2-2V8l-6-6zm4 18H6V4h7v5h5v11z"/></svg><span class="t" style="top:363.00px;font-size:11.00px;color:#4b7aab;letter-spacing:0.368px;left:1132.60px;">View/Amend Failed Standing Orders</span><span class="t" style="top:409.00px;font-size:11.80px;color:#333;letter-spacing:0.412px;left:1093.30px;">Payment Hub</span><svg class="ic" style="left:1377.80px;top:406.50px;width:25.40px;height:25.40px;" viewBox="0 0 24 24"><path fill="#111" d="M16.59 8.59L12 13.17 7.41 8.59 6 10l6 6 6-6z"/></svg><span class="t" style="top:458.00px;font-size:11.80px;color:#333;letter-spacing:0.358px;left:1093.30px;">Payment Order</span><svg class="ic" style="left:1377.80px;top:455.50px;width:25.40px;height:25.40px;" viewBox="0 0 24 24"><path fill="#111" d="M16.59 8.59L12 13.17 7.41 8.59 6 10l6 6 6-6z"/></svg><span class="t" style="top:507.00px;font-size:11.80px;color:#333;letter-spacing:0.401px;left:1093.30px;">Bulk Payments</span><svg class="ic" style="left:1377.80px;top:504.30px;width:25.40px;height:25.40px;" viewBox="0 0 24 24"><path fill="#111" d="M16.59 8.59L12 13.17 7.41 8.59 6 10l6 6 6-6z"/></svg><div class="abs" style="left:42px;top:1px;width:10px;height:646px;background:linear-gradient(90deg,rgba(60,65,85,.6),rgba(110,120,150,.28) 30%,rgba(160,170,200,.1) 60%,rgba(200,210,235,0));"></div><nav class="abs" style="left:0;top:0;width:42px;height:647px;background:#2c3262;"></nav><div class="abs" style="left:6px;top:13px;width:30px;height:30px;border-radius:50%;background:#fff;"></div><span class="t" style="left:5.900px;top:13.300px;width:30px;text-align:center;font-size:27.600px;line-height:30px;font-weight:bold;color:#0b3f74;transform:scaleX(1.2);">t</span><svg class="ic" style="left:12.75px;top:69.25px;width:16.50px;height:16.50px;" viewBox="0 0 24 24"><path fill="#fff" d="M3 18h18v-2H3v2zm0-5h18v-2H3v2zm0-7v2h18V6H3z"/></svg><svg class="ic" style="left:13.30px;top:120.80px;width:16.00px;height:16.00px;" viewBox="0 0 24 24"><path fill="#fff" stroke="#fff" stroke-width="0.70" d="M13 3c-4.97 0-9 4.03-9 9H1l3.89 3.89.07.14L9 12H6c0-3.87 3.13-7 7-7s7 3.13 7 7-3.13 7-7 7c-1.93 0-3.68-.79-4.94-2.06l-1.42 1.42C8.27 19.99 10.51 21 13 21c4.97 0 9-4.03 9-9s-4.03-9-9-9zm-1 5v5l4.28 2.54.72-1.21-3.5-2.08V8H12z"/></svg><svg class="ic" style="left:13.00px;top:170.60px;width:16.00px;height:16.00px;" viewBox="0 0 24 24"><path fill="#fff" d="M12 17.27L18.18 21l-1.64-7.03L22 9.24l-7.19-.61L12 2 9.19 8.63 2 9.24l5.46 4.73L5.82 21z"/></svg><svg class="ic" style="left:15.400px;top:225px;width:11.700px;height:10.700px" viewBox="0 0 11.700 10.700"><rect x="0.00" y="0.00" width="3.400" height="3" fill="#fff"/><rect x="4.15" y="0.00" width="3.400" height="3" fill="#fff"/><rect x="8.30" y="0.00" width="3.400" height="3" fill="#fff"/><rect x="0.00" y="3.85" width="3.400" height="3" fill="#fff"/><rect x="4.15" y="3.85" width="3.400" height="3" fill="#fff"/><rect x="8.30" y="3.85" width="3.400" height="3" fill="#fff"/><rect x="0.00" y="7.70" width="3.400" height="3" fill="#fff"/><rect x="4.15" y="7.70" width="3.400" height="3" fill="#fff"/><rect x="8.30" y="7.70" width="3.400" height="3" fill="#fff"/></svg><svg class="ic" style="left:13.10px;top:531.00px;width:15.80px;height:15.80px;" viewBox="0 0 24 24"><path fill="#fff" d="M19.43 12.98c.04-.32.07-.64.07-.98 0-.34-.03-.66-.07-.98l2.11-1.65c.19-.15.24-.42.12-.64l-2-3.46c-.09-.16-.26-.25-.44-.25-.06 0-.12.01-.17.03l-2.49 1c-.52-.4-1.08-.73-1.69-.98l-.38-2.65C14.46 2.180 14.250 2 14 2h-4c-.25 0-.46.18-.49.42l-.38 2.650c-.61.25-1.170.59-1.690.98l-2.490-1c-.06-.02-.12-.03-.18-.03-.17 0-.34.09-.43.25l-2 3.460c-.13.22-.07.49.12.64l2.110 1.650c-.04.32-.07.65-.07.98 0 .33.03.66.07.98l-2.110 1.650c-.19.15-.24.42-.12.64l2 3.460c.09.16.26.25.44.25.06 0 .12-.01.17-.03l2.490-1c.52.4 1.080.73 1.690.98l.38 2.650c.03.24.24.42.49.42h4c.25 0 .46-.18.49-.42l.38-2.650c.61-.25 1.170-.59 1.690-.98l2.490 1c.06.02.12.03.18.03.17 0 .34-.09.43-.25l2-3.460c.12-.22.07-.49-.12-.64l-2.110-1.650zm-1.980-1.710c.04.31.05.52.05.73 0 .21-.02.43-.05.73l-.14 1.130.89.7 1.080.84-.7 1.210-1.270-.51-1.040-.42-.9.68c-.43.32-.84.56-1.250.73l-1.060.43-.16 1.130-.2 1.350h-1.400l-.19-1.350-.16-1.130-1.060-.43c-.43-.18-.83-.41-1.230-.71l-.91-.7-1.060.43-1.270.51-.7-1.210 1.080-.84.89-.7-.14-1.130c-.03-.31-.05-.54-.05-.74s.02-.43.05-.73l.14-1.130-.89-.7-1.080-.84.7-1.210 1.270.51 1.040.42.9-.68c.43-.32.84-.56 1.250-.73l1.060-.43.16-1.130.2-1.350h1.390l.19 1.350.16 1.130 1.060.43c.43.18.83.41 1.230.71l.91.7 1.060-.43 1.270-.51.7 1.210-1.070.85-.89.7.14 1.130zM12 8c-2.210 0-4 1.790-4 4s1.790 4 4 4 4-1.790 4-4-1.790-4-4-4zm0 6c-1.100 0-2-.9-2-2s.9-2 2-2 2 .9 2 2-.9 2-2 2z"/></svg><svg class="ic" style="left:13.10px;top:573.50px;width:15.80px;height:15.80px;" viewBox="0 0 24 24"><path fill="#fff" d="M4 18v-.65c0-.34.16-.66.41-.81C6.100 15.530 8.030 15 10 15c.03 0 .05 0 .08.01.1-.7.3-1.370.59-1.980-.22-.02-.44-.03-.67-.03-2.420 0-4.680.67-6.610 1.820-.88.52-1.390 1.500-1.390 2.530V20h9.260c-.42-.6-.75-1.280-.97-2H4zM10 12c2.210 0 4-1.790 4-4s-1.790-4-4-4-4 1.790-4 4 1.790 4 4 4zm0-6c1.100 0 2 .9 2 2s-.9 2-2 2-2-.9-2-2 .9-2 2-2zM20.750 16c0-.22-.03-.42-.06-.63l1.140-1.010-1-1.730-1.450.49c-.32-.27-.68-.48-1.080-.63L18 11h-2l-.3 1.490c-.4.15-.76.36-1.080.63l-1.450-.49-1 1.730 1.140 1.010c-.03.21-.06.41-.06.63s.03.42.06.63l-1.140 1.010 1 1.730 1.450-.49c.32.27.68.48 1.080.63L16 21h2l.3-1.490c.4-.15.76-.36 1.080-.63l1.450.49 1-1.730-1.140-1.010c.03-.21.06-.41.06-.63zM17 18c-1.100 0-2-.9-2-2s.9-2 2-2 2 .9 2 2-.9 2-2 2z"/></svg><svg class="ic" style="left:12.80px;top:616.20px;width:16.20px;height:16.20px;" viewBox="0 0 24 24"><path fill="#fff" d="M17 7l-1.41 1.41L18.17 11H8v2h10.17l-2.58 2.58L17 17l5-5zM4 5h8V3H4c-1.1 0-2 .9-2 2v14c0 1.1.9 2 2 2h8v-2H4V5z"/></svg><footer class="abs" style="left:0;top:647px;width:1487px;height:41px;background:#fff;border-top:1px solid #bdbdbd;"></footer><div class="abs" style="left:10px;top:652px;width:273.700px;height:34.500px;border:1px solid #9a9a9a;border-radius:4px;background:#fff;"></div><svg class="ic" style="left:292.20px;top:660.20px;width:15.60px;height:15.60px;" viewBox="0 0 24 24"><path fill="#1f74d8" d="M4.01 6.03l7.51 3.22-7.52-1 .01-2.220m7.500 8.720L4 17.970v-2.220l7.510-1M2.010 3L2 10l15 2-15 2 .01 7L23 12 2.010 3z"/></svg><div class="abs" style="left:326px;top:649px;width:134.700px;height:39px;background:#d5edf8;"></div><span class="t" style="top:659.00px;font-size:11.80px;color:#555;letter-spacing:0.463px;left:344.60px;">Welcome to ...</span><svg class="ic" style="left:438.20px;top:661.90px;width:14.60px;height:14.60px;" viewBox="0 0 24 24"><path fill="#3a4175" d="M19 6.41L17.59 5 12 10.590 6.410 5 5 6.410 10.590 12 5 17.590 6.410 19 12 13.410 17.590 19 19 17.590 13.410 12z"/></svg><svg class="ic" style="left:1451.40px;top:663.20px;width:15.60px;height:15.60px;" viewBox="0 0 24 24"><path fill="#1f74d8" d="M22 3H7c-.69 0-1.230.35-1.590.88L0 12l5.410 8.110c.36.53.9.89 1.590.89h15c1.100 0 2-.9 2-2V5c0-1.100-.9-2-2-2zm0 16H7.070L2.400 12l4.660-7H22v14zm-11.590-2L14 13.410 17.590 17 19 15.590 15.410 12 19 8.410 17.590 7 14 10.590 10.410 7 9 8.410 12.590 12 9 15.590z"/></svg><div class="abs" style="left:1450px;top:634.500px;width:29px;height:13px;background:rgba(60,60,60,.27);border-radius:5px 5px 0 0;"></div><div class="abs" style="left:1459px;top:638.500px;width:12px;height:1.500px;background:#fff;"></div><div class="abs" style="left:1459px;top:641.500px;width:12px;height:1.500px;background:#fff;"></div><div class="abs" style="left:1479px;top:0;width:8px;height:688px;background:#f1f1f1;"></div><div class="abs" style="left:1479px;top:1.500px;width:8px;height:421.500px;background:#d0cdcd;border-radius:4px;"></div><div class="abs" style="left:0;top:0;width:1487px;height:1px;background:#e3e3e3;"></div></body></html>
